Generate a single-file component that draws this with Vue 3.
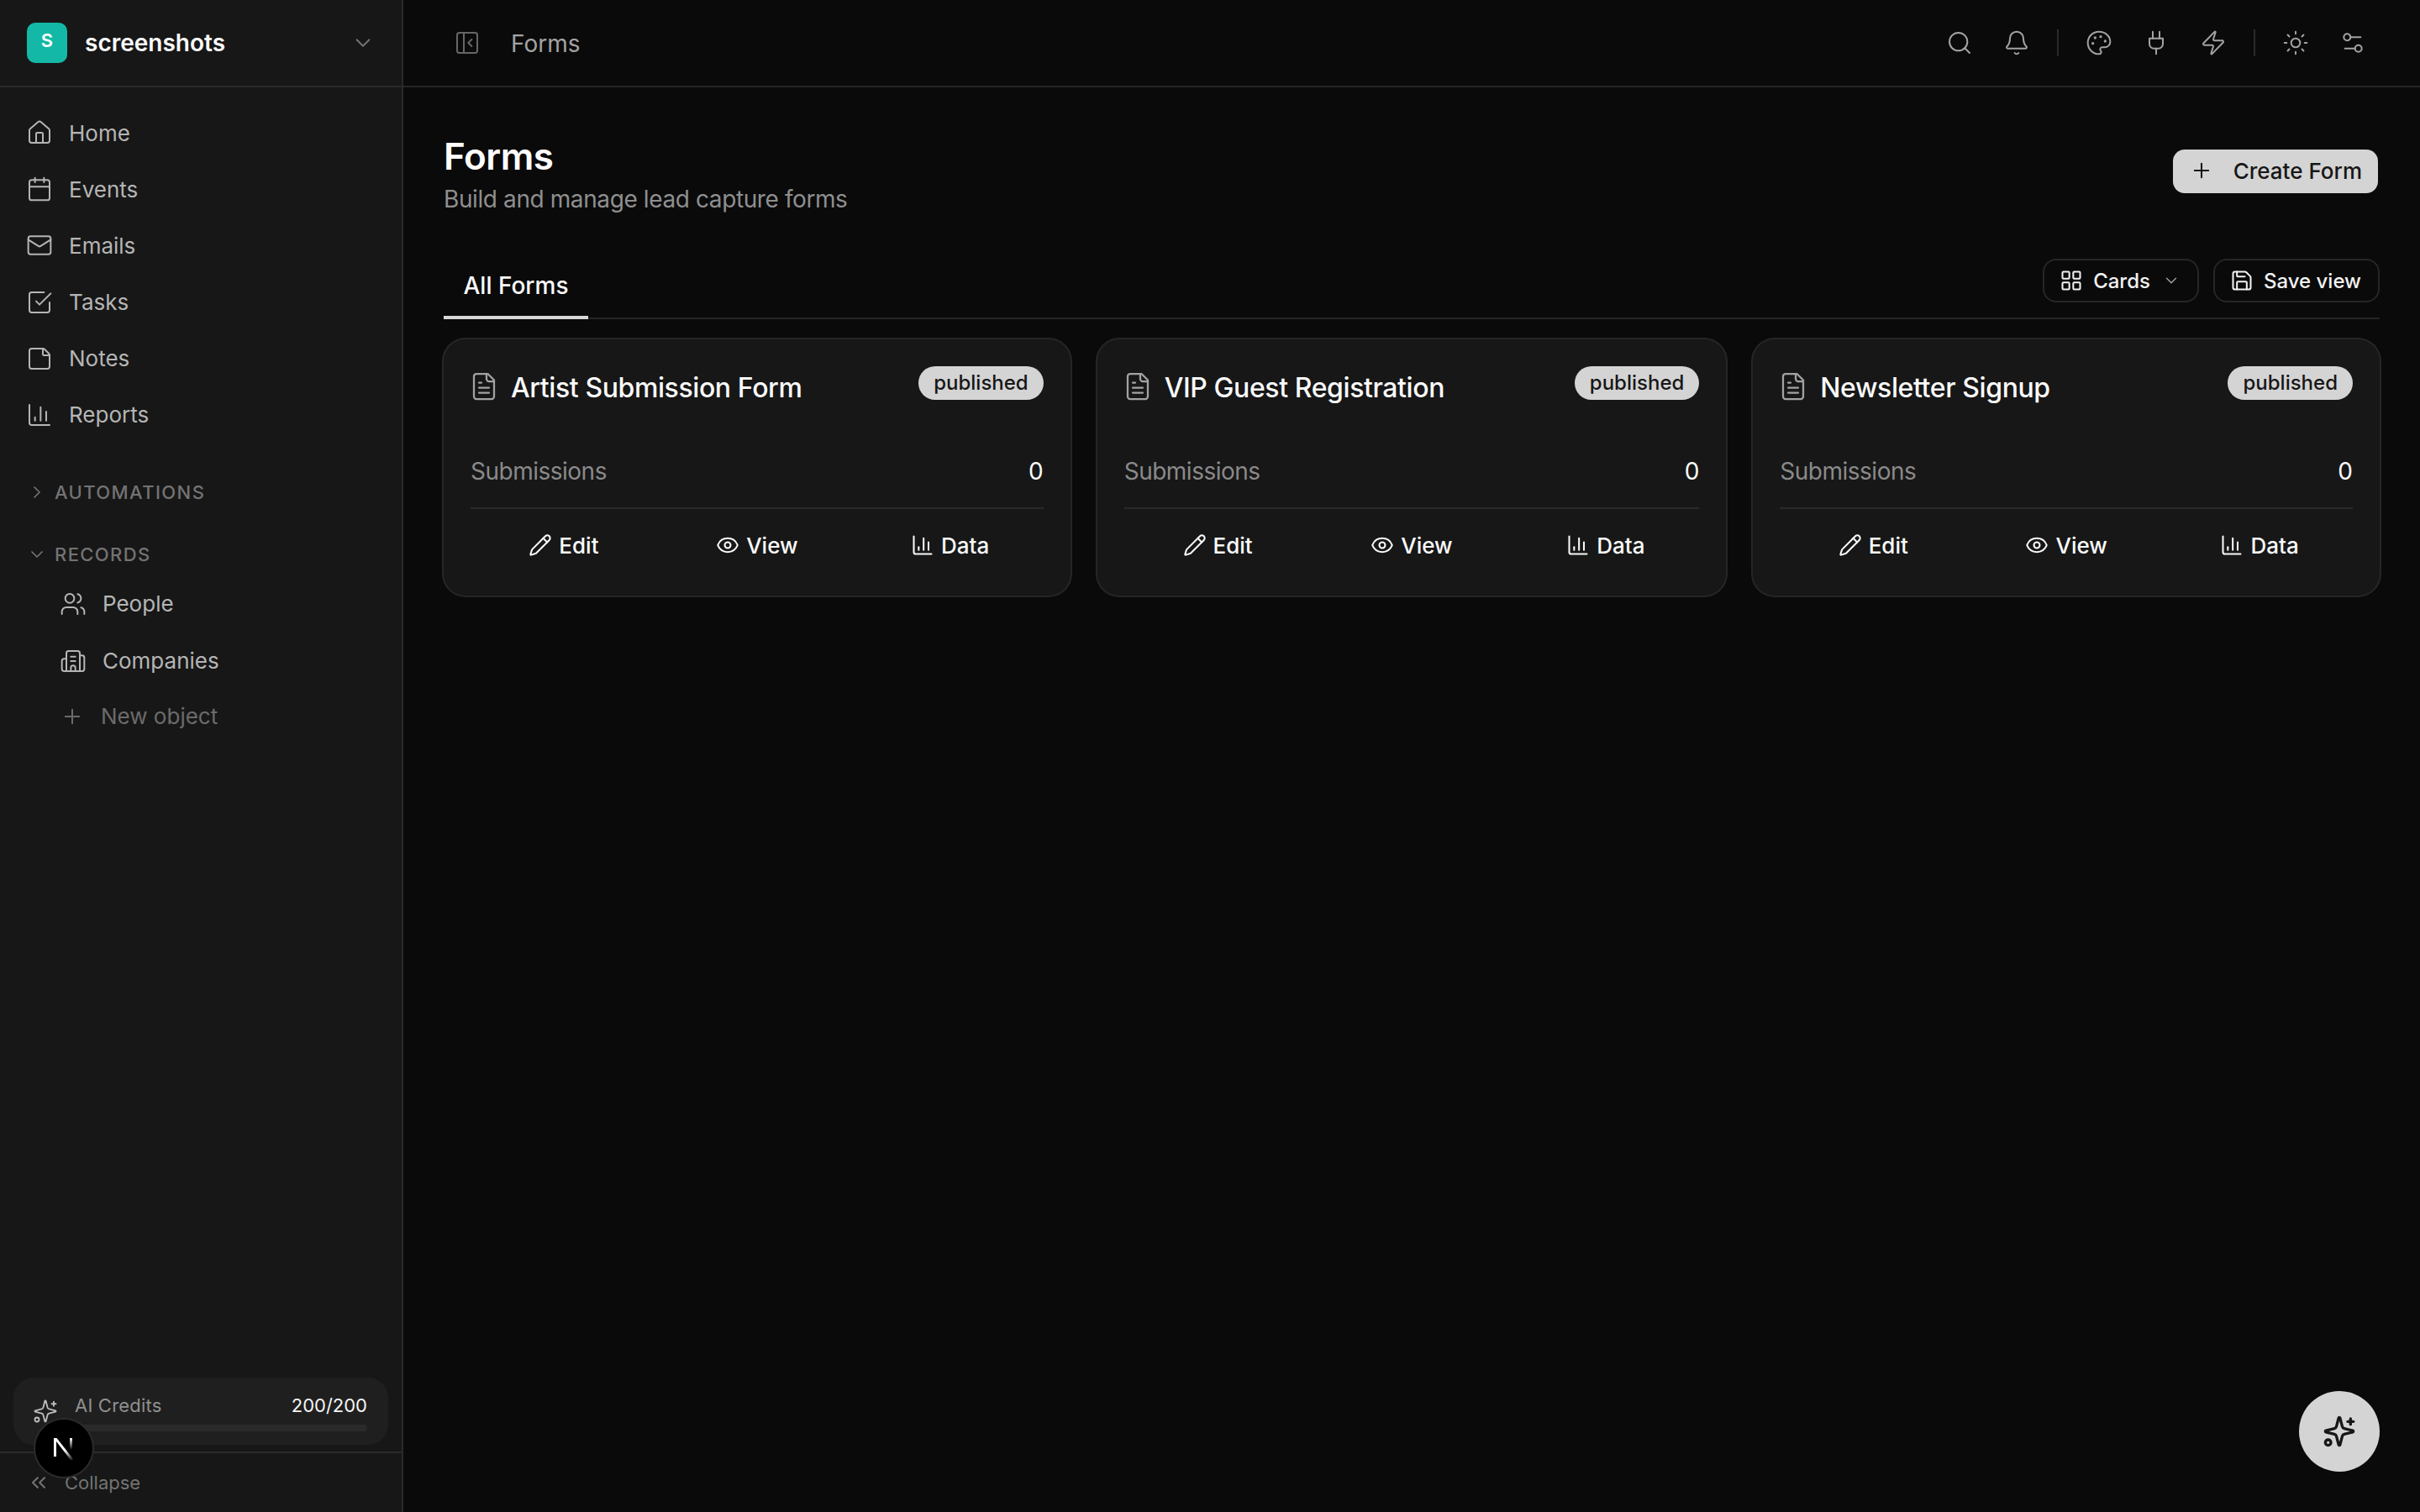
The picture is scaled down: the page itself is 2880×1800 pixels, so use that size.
<script setup>
import { h } from 'vue'

const icons = {
  home: '<path d="M15 21v-8a1 1 0 0 0-1-1h-4a1 1 0 0 0-1 1v8"/><path d="M3 10a2 2 0 0 1 .709-1.528l7-5.999a2 2 0 0 1 2.582 0l7 5.999A2 2 0 0 1 21 10v9a2 2 0 0 1-2 2H5a2 2 0 0 1-2-2z"/>',
  calendar: '<path d="M8 2v4"/><path d="M16 2v4"/><rect x="3" y="4" width="18" height="18" rx="2"/><path d="M3 10h18"/>',
  mail: '<rect x="2" y="4" width="20" height="16" rx="2"/><path d="m22 7-8.97 5.7a1.94 1.94 0 0 1-2.06 0L2 7"/>',
  check: '<path d="m9 11 3 3L22 4"/><path d="M21 12v7a2 2 0 0 1-2 2H5a2 2 0 0 1-2-2V5a2 2 0 0 1 2-2h11"/>',
  note: '<path d="M21 9a2.4 2.4 0 0 0-.706-1.706l-3.588-3.588A2.4 2.4 0 0 0 15 3H5a2 2 0 0 0-2 2v14a2 2 0 0 0 2 2h14a2 2 0 0 0 2-2z"/><path d="M15 3v5a1 1 0 0 0 1 1h5"/>',
  chart: '<path d="M3 3v16a2 2 0 0 0 2 2h16"/><path d="M18 17V9"/><path d="M13 17V5"/><path d="M8 17v-3"/>',
  down: '<path d="m6 9 6 6 6-6"/>',
  right: '<path d="m9 18 6-6-6-6"/>',
  users: '<path d="M16 21v-2a4 4 0 0 0-4-4H6a4 4 0 0 0-4 4v2"/><circle cx="9" cy="7" r="4"/><path d="M22 21v-2a4 4 0 0 0-3-3.87"/><path d="M16 3.13a4 4 0 0 1 0 7.75"/>',
  building: '<path d="M10 12h4"/><path d="M10 8h4"/><path d="M14 21v-3a2 2 0 0 0-4 0v3"/><path d="M6 10H4a2 2 0 0 0-2 2v7a2 2 0 0 0 2 2h16a2 2 0 0 0 2-2V9a2 2 0 0 0-2-2h-2"/><path d="M6 21V5a2 2 0 0 1 2-2h8a2 2 0 0 1 2 2v16"/>',
  plus: '<path d="M5 12h14"/><path d="M12 5v14"/>',
  sparkles: '<path d="M9.937 15.5A2 2 0 0 0 8.5 14.063l-6.135-1.582a.5.5 0 0 1 0-.962L8.5 9.936A2 2 0 0 0 9.937 8.5l1.582-6.135a.5.5 0 0 1 .963 0L14.063 8.5A2 2 0 0 0 15.5 9.937l6.135 1.581a.5.5 0 0 1 0 .964L15.5 14.063a2 2 0 0 0-1.437 1.437l-1.582 6.135a.5.5 0 0 1-.963 0z"/><path d="M20 3v4"/><path d="M22 5h-4"/><circle cx="4" cy="20" r="2"/>',
  collapse: '<path d="m11 17-5-5 5-5"/><path d="m18 17-5-5 5-5"/>',
  panel: '<rect x="3" y="3" width="18" height="18" rx="2"/><path d="M9 3v18"/><path d="m16 15-3-3 3-3"/>',
  search: '<path d="m21 21-4.34-4.34"/><circle cx="11" cy="11" r="8"/>',
  bell: '<path d="M10.268 21a2 2 0 0 0 3.464 0"/><path d="M3.262 15.326A1 1 0 0 0 4 17h16a1 1 0 0 0 .74-1.673C19.41 13.956 18 12.499 18 8A6 6 0 0 0 6 8c0 4.499-1.411 5.956-2.738 7.326"/>',
  palette: '<path d="M12 22a1 1 0 0 1 0-20 10 9 0 0 1 10 9 5 5 0 0 1-5 5h-2.25a1.75 1.75 0 0 0-1.4 2.8l.3.4a1.75 1.75 0 0 1-1.4 2.8z"/><circle cx="13.5" cy="6.5" r=".5" fill="currentColor"/><circle cx="17.5" cy="10.5" r=".5" fill="currentColor"/><circle cx="6.5" cy="12.5" r=".5" fill="currentColor"/><circle cx="8.5" cy="7.5" r=".5" fill="currentColor"/>',
  plug: '<path d="M12 22v-5"/><path d="M9 8V2"/><path d="M15 8V2"/><path d="M18 8v5a4 4 0 0 1-4 4h-4a4 4 0 0 1-4-4V8Z"/>',
  zap: '<path d="M4 14a1 1 0 0 1-.78-1.63l9.9-10.2a.5.5 0 0 1 .86.46l-1.92 6.02A1 1 0 0 0 13 10h7a1 1 0 0 1 .78 1.63l-9.9 10.2a.5.5 0 0 1-.86-.46l1.92-6.02A1 1 0 0 0 11 14z"/>',
  sun: '<circle cx="12" cy="12" r="4"/><path d="M12 2v2"/><path d="M12 20v2"/><path d="m4.93 4.93 1.41 1.41"/><path d="m17.66 17.66 1.41 1.41"/><path d="M2 12h2"/><path d="M20 12h2"/><path d="m6.34 17.66-1.41 1.41"/><path d="m19.07 4.93-1.41 1.41"/>',
  sliders: '<path d="M14 17H5"/><path d="M19 7h-9"/><circle cx="17" cy="17" r="3"/><circle cx="7" cy="7" r="3"/>',
  grid: '<rect x="3" y="3" width="7" height="7" rx="1"/><rect x="14" y="3" width="7" height="7" rx="1"/><rect x="14" y="14" width="7" height="7" rx="1"/><rect x="3" y="14" width="7" height="7" rx="1"/>',
  save: '<path d="M15.2 3a2 2 0 0 1 1.4.6l3.8 3.8a2 2 0 0 1 .6 1.4V19a2 2 0 0 1-2 2H5a2 2 0 0 1-2-2V5a2 2 0 0 1 2-2z"/><path d="M17 21v-7a1 1 0 0 0-1-1H8a1 1 0 0 0-1 1v7"/><path d="M7 3v4a1 1 0 0 0 1 1h7"/>',
  file: '<path d="M15 2H6a2 2 0 0 0-2 2v16a2 2 0 0 0 2 2h12a2 2 0 0 0 2-2V7Z"/><path d="M14 2v4a2 2 0 0 0 2 2h4"/><path d="M10 9H8"/><path d="M16 13H8"/><path d="M16 17H8"/>',
  pencil: '<path d="M21.174 6.812a1 1 0 0 0-3.986-3.987L3.842 16.174a2 2 0 0 0-.5.83l-1.321 4.352a.5.5 0 0 0 .623.622l4.353-1.32a2 2 0 0 0 .83-.497z"/><path d="m15 5 4 4"/>',
  eye: '<path d="M2.062 12.348a1 1 0 0 1 0-.696 10.75 10.75 0 0 1 19.876 0 1 1 0 0 1 0 .696 10.75 10.75 0 0 1-19.876 0"/><circle cx="12" cy="12" r="3"/>',
}

const Icon = (props) =>
  h('svg', {
    width: props.size || 32,
    height: props.size || 32,
    viewBox: '0 0 24 24',
    fill: 'none',
    stroke: 'currentColor',
    'stroke-width': props.stroke || 1.5,
    'stroke-linecap': 'round',
    'stroke-linejoin': 'round',
    innerHTML: icons[props.name],
  })
Icon.props = ['name', 'size', 'stroke']

const nav = [
  { label: 'Home', icon: 'home' },
  { label: 'Events', icon: 'calendar' },
  { label: 'Emails', icon: 'mail' },
  { label: 'Tasks', icon: 'check' },
  { label: 'Notes', icon: 'note' },
  { label: 'Reports', icon: 'chart' },
]

const forms = ['Artist Submission Form', 'VIP Guest Registration', 'Newsletter Signup']

const actions = [
  { label: 'Edit', icon: 'pencil' },
  { label: 'View', icon: 'eye' },
  { label: 'Data', icon: 'chart' },
]
</script>

<template>
  <div class="app">
    <aside class="sidebar">
      <div class="brand">
        <div class="logo">S</div>
        <div class="brand-name">screenshots</div>
        <Icon class="brand-chevron" name="down" :size="30" />
      </div>

      <nav class="nav">
        <div class="nav-row" v-for="item in nav" :key="item.label">
          <Icon :name="item.icon" />
          <span>{{ item.label }}</span>
        </div>
      </nav>

      <div class="section first">
        <Icon name="right" :size="24" :stroke="1.75" />
        <span>Automations</span>
      </div>
      <div class="section second">
        <Icon name="down" :size="24" :stroke="1.75" />
        <span>Records</span>
      </div>
      <div class="records">
        <div class="nav-row sub">
          <Icon name="users" />
          <span>People</span>
        </div>
        <div class="nav-row sub">
          <Icon name="building" />
          <span>Companies</span>
        </div>
        <div class="nav-row sub new-object">
          <Icon name="plus" :size="28" :stroke="1.75" />
          <span>New object</span>
        </div>
      </div>

      <div class="credits">
        <Icon name="sparkles" :size="30" />
        <div class="credits-body">
          <div class="credits-line">
            <span class="credits-label">AI Credits</span>
            <span class="credits-count">200/200</span>
          </div>
          <div class="credits-bar"></div>
        </div>
      </div>
      <div class="collapse">
        <Icon name="collapse" :size="28" :stroke="1.75" />
        <span>Collapse</span>
      </div>
    </aside>

    <main class="main">
      <header class="topbar">
        <Icon class="panel-icon" name="panel" />
        <div class="crumb">Forms</div>
        <div class="top-actions">
          <span class="top-icon"><Icon name="search" /></span>
          <span class="top-icon"><Icon name="bell" /></span>
          <i class="divider"></i>
          <span class="top-icon"><Icon name="palette" /></span>
          <span class="top-icon"><Icon name="plug" /></span>
          <span class="top-icon"><Icon name="zap" /></span>
          <i class="divider"></i>
          <span class="top-icon"><Icon name="sun" /></span>
          <span class="top-icon"><Icon name="sliders" /></span>
        </div>
      </header>

      <div class="content">
        <div class="page-head">
          <div>
            <h1 class="title">Forms</h1>
            <p class="subtitle">Build and manage lead capture forms</p>
          </div>
          <button class="create">
            <Icon name="plus" :size="28" :stroke="1.75" />
            <span>Create Form</span>
          </button>
        </div>

        <div class="tabs">
          <div class="tab">All Forms</div>
          <div class="tab-tools">
            <button class="tool cards-tool">
              <Icon name="grid" :size="28" :stroke="1.75" />
              <span>Cards</span>
              <Icon class="tool-chevron" name="down" :size="22" />
            </button>
            <button class="tool save-tool">
              <Icon name="save" :size="28" :stroke="1.75" />
              <span>Save view</span>
            </button>
          </div>
        </div>

        <div class="cards">
          <div class="card" v-for="form in forms" :key="form">
            <div class="card-head">
              <Icon class="doc" name="file" :size="36" />
              <div class="card-title">{{ form }}</div>
              <span class="badge">published</span>
            </div>
            <div class="stat">
              <span class="stat-label">Submissions</span>
              <span class="stat-value">0</span>
            </div>
            <div class="card-actions">
              <div class="action" v-for="action in actions" :key="action.label">
                <Icon :name="action.icon" :size="28" :stroke="1.75" />
                <span>{{ action.label }}</span>
              </div>
            </div>
          </div>
        </div>
      </div>
    </main>

    <div class="next-badge">
      <svg width="30" height="30" viewBox="0 0 30 30">
        <defs>
          <linearGradient id="n-fade" x1="0" y1="0" x2="0" y2="1">
            <stop offset="0" stop-color="#fff" />
            <stop offset="1" stop-color="#fff" stop-opacity="0" />
          </linearGradient>
          <linearGradient id="n-diag" x1="0" y1="0" x2="1" y2="1">
            <stop offset="0.55" stop-color="#fff" />
            <stop offset="1" stop-color="#fff" stop-opacity="0" />
          </linearGradient>
        </defs>
        <rect x="3" y="3" width="3" height="22" fill="#fff" />
        <polygon points="3,3 6.5,3 27,29 23,29" fill="url(#n-diag)" />
        <rect x="22" y="3" width="3" height="14" fill="url(#n-fade)" />
      </svg>
    </div>

    <button class="fab">
      <Icon name="sparkles" :size="40" :stroke="2" />
    </button>
  </div>
</template>

<style scoped>
.app {
  display: flex;
  height: 1800px;
  position: relative;
  overflow: hidden;
  background: #0a0a0a;
  font-family: Inter, "Liberation Sans", sans-serif;
  color: #fafafa;
}

.sidebar {
  width: 480px;
  box-sizing: border-box;
  border-right: 2px solid #2a2a2a;
  background: #171717;
  display: flex;
  flex-direction: column;
  flex-shrink: 0;
}

.brand {
  height: 104px;
  box-sizing: border-box;
  border-bottom: 2px solid #2a2a2a;
  padding: 0 31px 0 32px;
  display: flex;
  align-items: center;
  gap: 21px;
}

.logo {
  width: 48px;
  height: 48px;
  border-radius: 10px;
  background: #14b8a6;
  color: #fff;
  font-size: 22px;
  font-weight: 600;
  line-height: 42px;
  text-align: center;
}

.brand-name {
  font-size: 28px;
  font-weight: 600;
  flex: 1;
}

.brand-chevron {
  color: #737373;
}

.nav {
  padding: 22px 0 0 31px;
  display: flex;
  flex-direction: column;
  gap: 3.2px;
}

.nav-row {
  height: 64px;
  display: flex;
  align-items: center;
  gap: 19px;
  font-size: 26px;
  color: #b5b5b5;
}

.section {
  height: 40px;
  padding-left: 32px;
  display: flex;
  align-items: center;
  gap: 9px;
  font-size: 22px;
  font-weight: 500;
  letter-spacing: 1.4px;
  text-transform: uppercase;
  color: #737373;
}

.section.first {
  margin-top: 40px;
}

.section.second {
  margin-top: 34px;
}

.records {
  margin-top: 7px;
  padding-left: 71px;
  display: flex;
  flex-direction: column;
  gap: 4px;
}

.nav-row.sub {
  gap: 19px;
}

.nav-row.new-object {
  margin-top: -2px;
  color: #6b6b6b;
  gap: 20px;
  padding-left: 1px;
}

.credits {
  margin: auto 16px 8px;
  height: 80px;
  border-radius: 24px;
  background: #1f1f1f;
  padding: 0 25px 0 23px;
  display: flex;
  align-items: center;
  gap: 20px;
  color: #bdbdbd;
}

.credits-body {
  flex: 1;
  padding-top: 1px;
}

.credits-line {
  display: flex;
  justify-content: space-between;
  align-items: center;
  height: 32px;
  margin-bottom: 7px;
  font-size: 22px;
}

.credits-label {
  color: #8f8f8f;
  letter-spacing: 0.2px;
}

.credits-count {
  color: #f5f5f5;
}

.credits-bar {
  height: 8px;
  border-radius: 4px;
  background: #2a2a2a;
}

.collapse {
  height: 72px;
  box-sizing: border-box;
  border-top: 2px solid #2a2a2a;
  padding: 0 0 0 32px;
  display: flex;
  align-items: center;
  gap: 17px;
  font-size: 22px;
  color: #737373;
}

.main {
  flex: 1;
  min-width: 0;
  display: flex;
  flex-direction: column;
}

.topbar {
  height: 104px;
  box-sizing: border-box;
  border-bottom: 2px solid #262626;
  padding: 0 62px 0 60px;
  display: flex;
  align-items: center;
}

.panel-icon {
  color: #666;
  margin-right: 36px;
}

.crumb {
  font-size: 28px;
  color: #a3a3a3;
  flex: 1;
  padding-top: 2px;
}

.top-actions {
  display: flex;
  align-items: center;
  gap: 32px;
  color: #a3a3a3;
}

.top-icon {
  width: 36px;
  height: 36px;
  display: flex;
  align-items: center;
  justify-content: center;
}

.divider {
  width: 2px;
  height: 32px;
  margin: 0 -2px;
  background: #2a2a2a;
}

.content {
  padding: 54px 48px 0;
}

.page-head {
  display: flex;
  justify-content: space-between;
  align-items: flex-start;
}

.title {
  margin: 0;
  font-size: 44px;
  line-height: 56px;
  font-weight: 600;
  color: #fff;
  letter-spacing: -0.5px;
}

.subtitle {
  margin: 3px 0 0;
  font-size: 28px;
  line-height: 40px;
  letter-spacing: -0.4px;
  color: #8f8f8f;
}

button {
  font-family: inherit;
}

.create {
  margin: 20px 2px 0 0;
  height: 52px;
  padding: 0 19px 2px 20px;
  border: none;
  border-radius: 14px;
  background: #d4d4d4;
  color: #171717;
  display: flex;
  align-items: center;
  gap: 24px;
  font-size: 26px;
  font-weight: 500;
  white-space: nowrap;
}

.tabs {
  margin-top: 51px;
  height: 72px;
  box-sizing: border-box;
  border-bottom: 2px solid #262626;
  display: flex;
  justify-content: space-between;
  align-items: flex-start;
}

.tab {
  width: 172px;
  height: 72px;
  box-sizing: border-box;
  border-bottom: 4px solid #d8d8d8;
  padding-top: 12px;
  line-height: 40px;
  text-align: center;
  font-size: 28px;
  font-weight: 500;
  color: #fafafa;
}

.tab-tools {
  display: flex;
  gap: 17px;
}

.tool {
  height: 52px;
  padding: 0 20px 0 18px;
  box-sizing: border-box;
  border: 2px solid #262626;
  border-radius: 16px;
  background: transparent;
  color: #f2f2f2;
  display: flex;
  align-items: center;
  gap: 12px;
  font-size: 24px;
  font-weight: 500;
}

.tool-chevron {
  color: #a3a3a3;
  margin-left: 2px;
}

.cards {
  margin-top: 24px;
  display: grid;
  grid-template-columns: 1fr 1.004fr 1fr;
  gap: 32px;
}

.card {
  height: 305px;
  box-sizing: border-box;
  box-shadow: 0 0 0 2px #262626;
  border-radius: 26px;
  background: #171717;
  padding: 32px;
}

.card-head {
  display: flex;
  align-items: flex-start;
  height: 48px;
}

.doc {
  color: #a3a3a3;
  margin: 6px 14px 0 -2px;
}

.card-title {
  flex: 1;
  margin-top: 2px;
  font-size: 32px;
  line-height: 48px;
  letter-spacing: -0.4px;
  font-weight: 500;
  color: #fafafa;
}

.badge {
  height: 40px;
  line-height: 40px;
  padding: 0 18px;
  border-radius: 20px;
  background: #d4d4d4;
  color: #171717;
  font-size: 24px;
  font-weight: 500;
}

.stat {
  margin-top: 58px;
  height: 64px;
  box-sizing: border-box;
  border-bottom: 2px solid #2a2a2a;
  padding-bottom: 24px;
  display: flex;
  justify-content: space-between;
  align-items: center;
  font-size: 28px;
}

.stat-label {
  color: #8a8a8a;
  letter-spacing: -0.5px;
}

.stat-value {
  color: #fafafa;
}

.card-actions {
  margin-top: 23px;
  display: grid;
  grid-template-columns: repeat(3, 1fr);
  gap: 8px;
}

.action {
  height: 40px;
  display: flex;
  align-items: center;
  justify-content: center;
  gap: 8px;
  font-size: 26px;
  font-weight: 500;
  color: #fafafa;
}

.next-badge {
  position: absolute;
  left: 40px;
  top: 1688px;
  width: 72px;
  height: 72px;
  box-sizing: border-box;
  border: 2px solid #2b2b2b;
  border-radius: 50%;
  background: #000;
  display: flex;
  align-items: center;
  justify-content: center;
}

.fab {
  position: absolute;
  left: 2736px;
  top: 1656px;
  width: 96px;
  height: 96px;
  border: none;
  border-radius: 50%;
  background: #d4d4d4;
  color: #171717;
  display: flex;
  align-items: center;
  justify-content: center;
}
</style>

<style>
html,
body {
  margin: 0;
  background: #0a0a0a;
}
</style>
